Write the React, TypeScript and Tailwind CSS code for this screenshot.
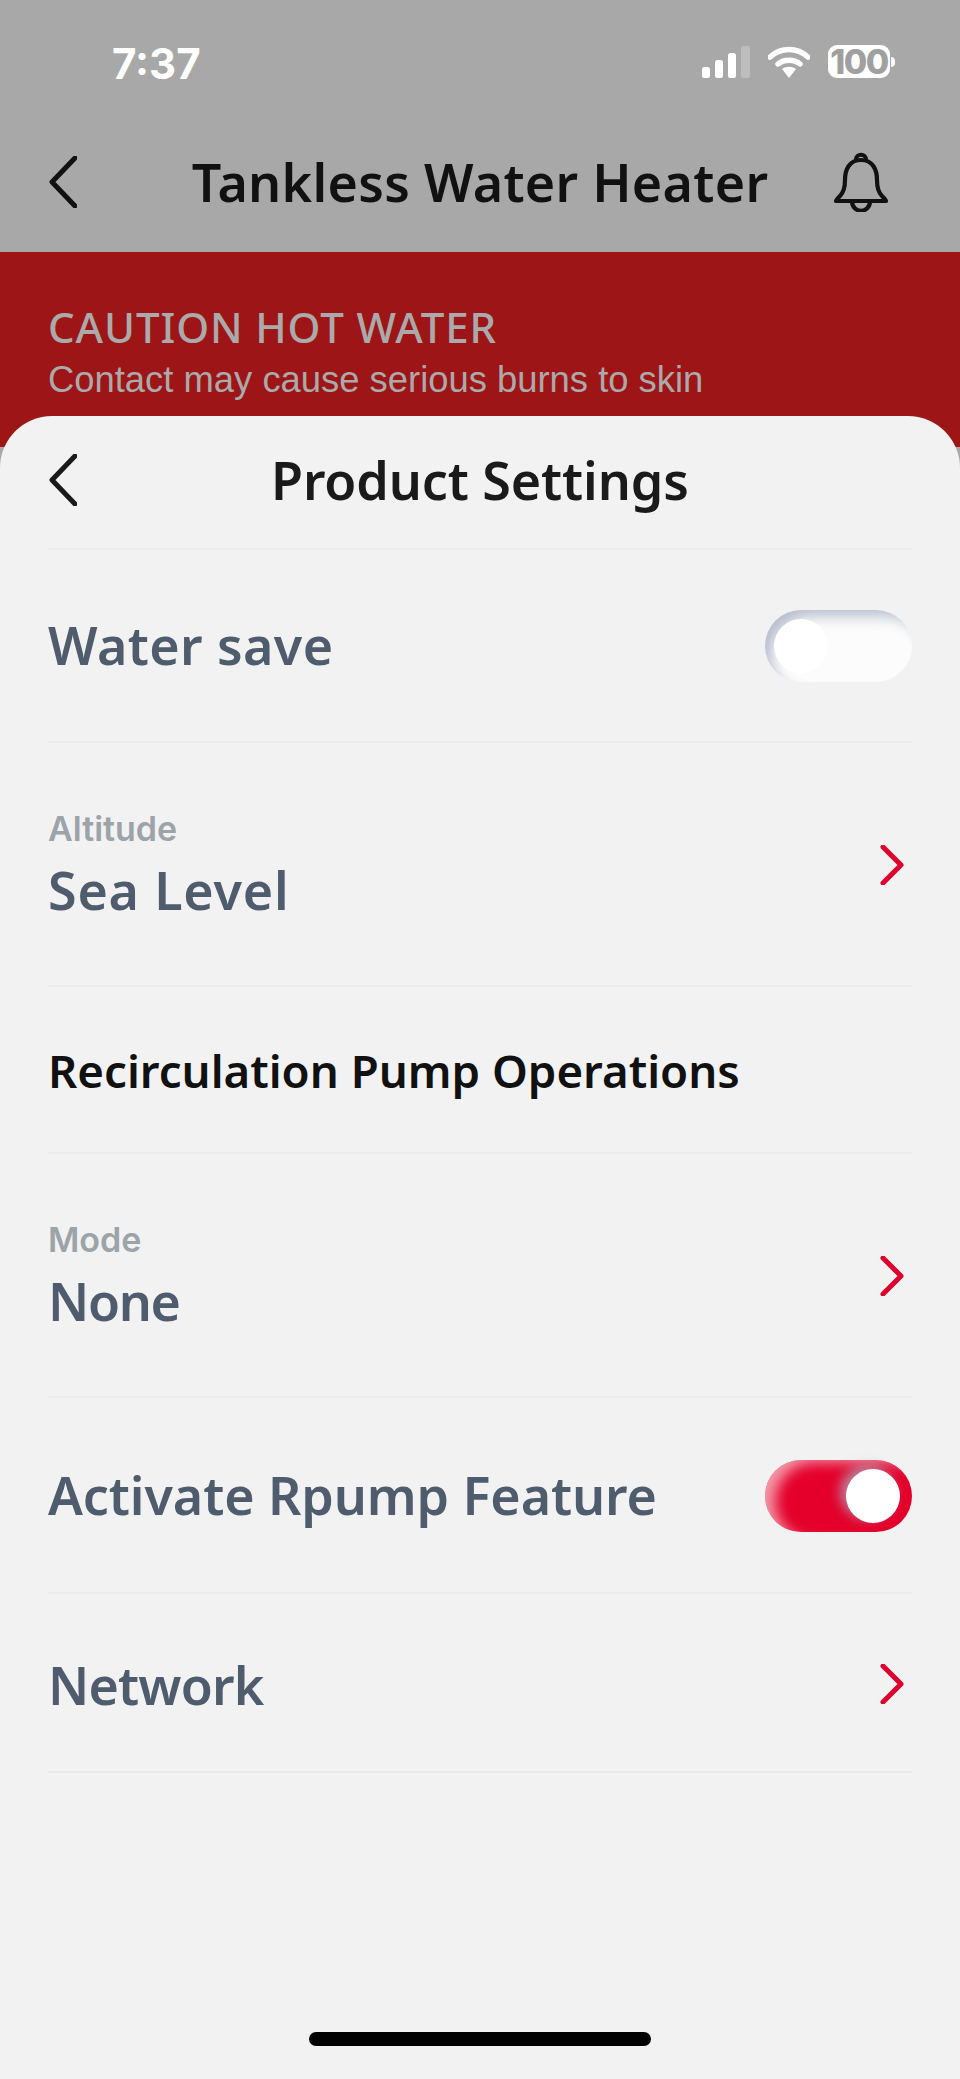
import React from "react";

const body = "font-['Noto_Sans',sans-serif]";
const titleCls = `${body} text-[52px] leading-[64px] font-semibold text-[#4f5c6e] whitespace-nowrap`;

function Chevron({ color = "#111", cls = "" }: { color?: string; cls?: string }) {
  return (
    <svg viewBox="0 0 28 52" className={cls} fill="none">
      <path d="M26 2 L3 26 L26 50" stroke={color} strokeWidth="5" strokeLinecap="round" strokeLinejoin="round" />
    </svg>
  );
}

function RedChevron() {
  return (
    <svg viewBox="0 0 24 40" className="w-6 h-10" fill="none">
      <path d="M3 2 L21 20 L3 38" stroke="#e0002d" strokeWidth="5" strokeLinecap="round" strokeLinejoin="round" />
    </svg>
  );
}

function Toggle({ on }: { on: boolean }) {
  if (on) {
    return (
      <div className="w-[147px] h-[72px] mt-[2px] rounded-full bg-[#e4002b] shadow-[inset_14px_6px_14px_-4px_rgba(255,255,255,0.6)] flex items-center justify-end pr-3">
        <div className="w-[54px] h-[54px] rounded-full bg-white shadow-[-6px_-4px_12px_rgba(170,180,200,0.7)]" />
      </div>
    );
  }
  return (
    <div className="w-[147px] h-[72px] rounded-full bg-[#fcfcfc] shadow-[inset_10px_10px_14px_-4px_rgba(170,176,198,0.85)] flex items-center pl-[9px]">
      <div className="w-[54px] h-[54px] rounded-full bg-white" />
    </div>
  );
}

function Row({ h, children }: { h: string; children: React.ReactNode }) {
  return (
    <div className={`${h} border-b-2 border-[#ececec] flex items-center justify-between`}>{children}</div>
  );
}

function Picker({ label, value, track }: { label: string; value: string; track: string }) {
  return (
    <>
      <div className="flex flex-col">
        <span className="font-['Inter',sans-serif] text-[34px] leading-[44px] font-semibold text-[#9ca3a9]">{label}</span>
        <span className={`${titleCls} ${track} mt-[7px]`}>{value}</span>
      </div>
      <div className="pr-2 pt-[2px] flex"><RedChevron /></div>
    </>
  );
}

export default function App() {
  return (
    <div className="w-[960px] h-[2079px] bg-[#a8a8a8] flex flex-col overflow-hidden relative">
      <div className="h-[128px] pt-[45px] pl-[112px] pr-[65px] flex justify-between items-start">
        <span className="font-['Inter',sans-serif] text-[42px] leading-[38px] font-bold text-white">7:37</span>
        <div className="flex items-center gap-[18px]">
          <svg viewBox="0 0 48 32" className="w-12 h-8">
            <rect x="0" y="21" width="8" height="11" rx="2.5" fill="#fff" />
            <rect x="13" y="14" width="8" height="18" rx="2.5" fill="#fff" />
            <rect x="26" y="7" width="8" height="25" rx="2.5" fill="#fff" />
            <rect x="39" y="0" width="9" height="32" rx="2.5" fill="#bdbdbd" />
          </svg>
          <svg viewBox="0 0 42 32" className="w-[42px] h-8" fill="none">
            <path d="M2 11 C13 1 29 1 40 11" stroke="#fff" strokeWidth="5.5" strokeLinecap="round" />
            <path d="M10 18 C16 13 26 13 32 18" stroke="#fff" strokeWidth="5.5" strokeLinecap="round" />
            <path d="M14 23 C18 20 24 20 28 23 L21 32 Z" fill="#fff" />
          </svg>
          <div className="flex items-center">
            <div className="w-[62px] h-[33px] rounded-[9px] bg-white flex items-center justify-center">
              <span className="font-['Inter',sans-serif] text-[34px] leading-none font-extrabold text-[#a0a0a0] tracking-[-1.5px]">100</span>
            </div>
            <div className="w-[4px] h-[10px] ml-px bg-white rounded-r-full" />
          </div>
        </div>
      </div>

      <div className="h-[124px] pl-[49px] pr-[72px] pb-[16px] flex items-center justify-between">
        <Chevron cls="w-7 h-[52px]" />
        <span className={`${body} text-[52px] leading-[60px] font-semibold tracking-[0.3px] text-[#111] whitespace-nowrap ml-[49px]`}>Tankless Water Heater</span>
        <svg viewBox="0 0 54 60" className="w-[54px] h-[60px]" fill="none" stroke="#111" strokeWidth="4.2" strokeLinejoin="round">
          <path d="M27 8 C15 8 11 18 11 28 C11 36 10 40 6 44 C3 47 2 48 2 49 L52 49 C52 48 51 47 48 44 C44 40 43 36 43 28 C43 18 39 8 27 8 Z" />
          <path d="M22 8 C22 1 32 1 32 8" />
          <path d="M18 49 C18 62 36 62 36 49" />
        </svg>
      </div>

      <div className="h-[195px] bg-[#9e1518] pl-[48px] pt-[52px]">
        <div className="font-['Noto_Sans',sans-serif] text-[42px] leading-[46px] font-medium tracking-[0.9px] text-[#aaaaaa] whitespace-nowrap">CAUTION HOT WATER</div>
        <div className="font-['Liberation_Sans',sans-serif] text-[36.4px] leading-[42px] mt-[9px] text-[#aaaaaa] whitespace-nowrap">Contact may cause serious burns to skin</div>
      </div>

      <div className="mt-[-31px] flex-1 bg-[#f2f2f2] rounded-t-[52px] px-[48px] flex flex-col relative">
        <Row h="h-[134px]">
          <div className="flex-1 flex items-center pb-[4px] relative">
            <Chevron color="#1a1a1a" cls="w-7 h-[52px] ml-px" />
            <span className={`${body} text-[52px] leading-[60px] font-semibold tracking-[-0.1px] text-[#1a1a1a] whitespace-nowrap ml-[194px]`}>Product Settings</span>
          </div>
        </Row>
        <Row h="h-[193px]">
          <span className={`${titleCls} tracking-[0.4px] pb-[2px]`}>Water save</span>
          <Toggle on={false} />
        </Row>
        <Row h="h-[244px]">
          <Picker label="Altitude" value="Sea Level" track="tracking-[0.8px]" />
        </Row>
        <Row h="h-[167px]">
          <span className={`${body} text-[45.6px] leading-[56px] font-semibold text-[#111] whitespace-nowrap`}>Recirculation Pump Operations</span>
        </Row>
        <Row h="h-[244px]">
          <Picker label="Mode" value="None" track="tracking-[-1.3px]" />
        </Row>
        <Row h="h-[196px]">
          <span className={`${titleCls} tracking-[-0.1px]`}>Activate Rpump Feature</span>
          <Toggle on={true} />
        </Row>
        <Row h="h-[179px]">
          <span className={`${titleCls} tracking-[-0.8px] pt-[4px]`}>Network</span>
          <div className="pr-2 pt-[2px] flex"><RedChevron /></div>
        </Row>
        <div className="flex-1 flex items-end justify-center pb-[33px]">
          <div className="w-[342px] h-[14px] rounded-full bg-black" />
        </div>
      </div>
    </div>
  );
}
